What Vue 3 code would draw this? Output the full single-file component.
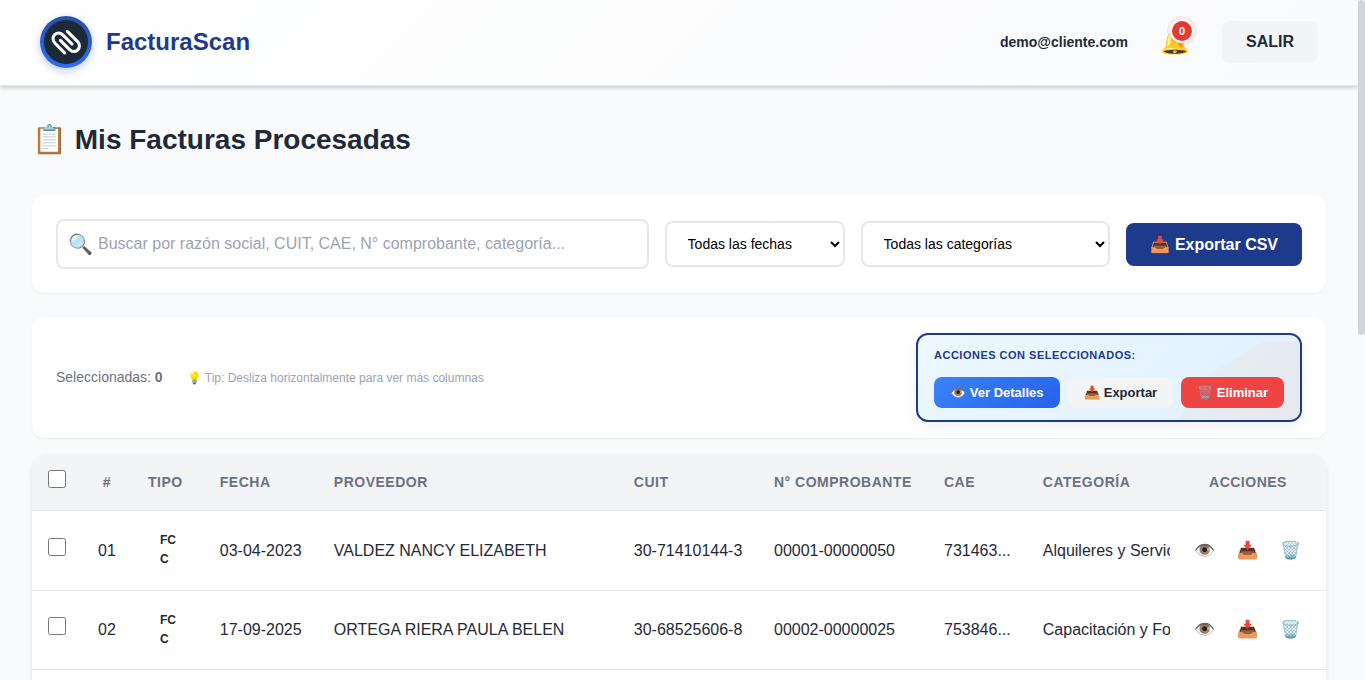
<template>
  <div class="app">
    <div class="page">
      <header class="header">
        <div class="brand">
          <div class="logo">
            <svg viewBox="0 0 44 44" width="44" height="44">
              <path d="M20.6 32.8 L10.8 23 C8.2 20.3 8.7 16.6 10.8 14.6 C13 12.5 16.2 12.3 18.8 14.8 L28 24" />
              <path d="M23.3 11.3 L33.6 21.6 C36.3 24.4 35.8 28 33.6 30 C31.4 32 28 32 25.6 29.6 L16.4 20.4" />
            </svg>
          </div>
          <span class="brand-name">FacturaScan</span>
        </div>
        <div class="user">
          <span class="email">demo@cliente.com</span>
          <div class="bell">🔔<span class="badge">0</span></div>
          <button class="btn-logout">SALIR</button>
        </div>
      </header>

      <main class="main">
        <h1 class="title">📋 Mis Facturas Procesadas</h1>

        <!-- Filters -->
        <section class="card filters">
          <div class="search">
            <span class="search-icon">🔍</span>
            <input v-model="search" type="text" placeholder="Buscar por razón social, CUIT, CAE, N° comprobante, categoría..." />
          </div>
          <select class="select select-date">
            <option>Todas las fechas</option>
          </select>
          <select class="select select-category">
            <option>Todas las categorías</option>
          </select>
          <button class="btn-csv">📥 Exportar CSV</button>
        </section>

        <!-- Bulk actions -->
        <section class="card selection">
          <div class="selection-info">
            <span class="count">Seleccionadas: <strong>{{ selected.length }}</strong></span>
            <span class="tip">💡 Tip: Desliza horizontalmente para ver más columnas</span>
          </div>
          <div class="bulk">
            <div class="bulk-title">ACCIONES CON SELECCIONADOS:</div>
            <div class="bulk-buttons">
              <button class="bulk-btn view">👁️ Ver Detalles</button>
              <button class="bulk-btn export">📥 Exportar</button>
              <button class="bulk-btn delete"><span class="faded">🗑️</span> Eliminar</button>
            </div>
          </div>
        </section>

        <!-- Invoices -->
        <div class="table-card">
          <table>
            <colgroup>
              <col v-for="(w, i) in widths" :key="i" :style="{ width: w + 'px' }" />
            </colgroup>
            <thead>
              <tr>
                <th class="check-cell"><input type="checkbox" class="check" /></th>
                <th class="center">#</th>
                <th>TIPO</th>
                <th>FECHA</th>
                <th>PROVEEDOR</th>
                <th>CUIT</th>
                <th>N° COMPROBANTE</th>
                <th>CAE</th>
                <th>CATEGORÍA</th>
                <th class="center">ACCIONES</th>
              </tr>
            </thead>
            <tbody>
              <tr v-for="row in invoices" :key="row.num">
                <td><input v-model="selected" type="checkbox" class="check" :value="row.num" /></td>
                <td class="center">{{ row.num }}</td>
                <td><span class="type">FC<br />C</span></td>
                <td>{{ row.date }}</td>
                <td>{{ row.provider }}</td>
                <td>{{ row.cuit }}</td>
                <td>{{ row.number }}</td>
                <td>{{ row.cae }}</td>
                <td class="category"><div>{{ row.category }}</div></td>
                <td class="actions">
                  <div class="row-actions">
                    <button>👁️</button>
                    <button>📥</button>
                    <button>🗑️</button>
                  </div>
                </td>
              </tr>
            </tbody>
          </table>
        </div>
      </main>
    </div>
    <div class="scrollbar"><div class="thumb"></div></div>
  </div>
</template>

<script setup>
import { ref } from 'vue'

const search = ref('')
const selected = ref([])
const widths = [50, 50, 71.8, 114, 300, 140.2, 170, 98.8, 143.2, 156]

const invoices = [
  { num: '01', date: '03-04-2023', provider: 'VALDEZ NANCY ELIZABETH', cuit: '30-71410144-3', number: '00001-00000050', cae: '731463...', category: 'Alquileres y Servicios' },
  { num: '02', date: '17-09-2025', provider: 'ORTEGA RIERA PAULA BELEN', cuit: '30-68525606-8', number: '00002-00000025', cae: '753846...', category: 'Capacitación y Formación' }
]
</script>

<style>
body {
  margin: 0;
  overflow: hidden;
}
</style>

<style scoped>
.app {
  display: flex;
  height: 680px;
  overflow: hidden;
  background: #f9fafc;
  color: #1f2937;
  font-family: "Liberation Sans", Arial, sans-serif;
  font-size: 16px;
}

.app * {
  box-sizing: border-box;
}

button {
  border: 0;
  font-family: inherit;
  white-space: nowrap;
}

.page {
  flex: 1;
  min-width: 0;
}

.header {
  display: flex;
  align-items: center;
  justify-content: space-between;
  height: 86px;
  padding: 0 40px 2px;
  background: linear-gradient(135deg, #ffffff 0%, #f9fafc 100%);
  border-bottom: 1px solid #e5e7eb;
  box-shadow: 0 2px 4px rgba(0, 0, 0, 0.18);
}

.brand {
  display: flex;
  align-items: center;
  gap: 14px;
}

.logo {
  display: flex;
  width: 52px;
  height: 52px;
  padding: 4px;
  border-radius: 50%;
  background: linear-gradient(180deg, #2c4fa8, #2d6cf5);
  box-shadow: 0 2px 8px rgba(37, 99, 235, 0.22), 0 4px 8px rgba(0, 0, 0, 0.08);
}

.logo svg {
  border-radius: 50%;
  background: #1c2938;
  fill: none;
  stroke: #fff;
  stroke-width: 3.1;
  stroke-linecap: round;
}

.brand-name {
  color: #1e3a8a;
  font-size: 24px;
  font-weight: 700;
}

.user {
  display: flex;
  align-items: center;
}

.email {
  font-size: 14px;
  font-weight: 600;
}

.bell {
  position: relative;
  width: 30px;
  margin: 0 32px;
  font-size: 24px;
  line-height: 28px;
}

.badge {
  position: absolute;
  top: -9px;
  left: 10px;
  width: 24px;
  height: 24px;
  border: 2px solid #fff;
  border-radius: 50%;
  background: #e53935;
  box-shadow: 0 0 0 3px rgba(239, 68, 68, 0.1);
  color: #fff;
  font-size: 11px;
  font-weight: 700;
  line-height: 20px;
  text-align: center;
}

.btn-logout {
  width: 96px;
  height: 42px;
  border-radius: 8px;
  background: #f3f4f6;
  color: #1f2937;
  font-size: 16px;
  font-weight: 600;
}

.main {
  padding: 32px;
}

.title {
  height: 45px;
  margin: 0 0 32px;
  font-size: 28px;
  line-height: 43px;
}

.card {
  display: flex;
  align-items: center;
  border-radius: 12px;
  background: #fff;
  box-shadow: 0 1px 2px rgba(0, 0, 0, 0.06);
}

.filters {
  gap: 16px;
  height: 98px;
  padding: 0 24px;
}

.search {
  display: flex;
  flex: 1;
  align-items: center;
  height: 50px;
  padding-left: 10px;
  border: 2px solid #e5e7eb;
  border-radius: 8px;
}

.search-icon {
  width: 30px;
  font-size: 20px;
}

.search input {
  flex: 1;
  padding: 0;
  border: 0;
  outline: 0;
  background: none;
  font-family: inherit;
  font-size: 16px;
}

.search input::placeholder {
  color: #9ca3af;
}

.select {
  height: 46px;
  padding: 0 0 0 16.6px;
  border: 2px solid #e5e7eb;
  border-radius: 8px;
  background: #fff;
  color: #000;
  font-family: inherit;
  font-size: 14px;
}

.select-date {
  width: 180px;
}

.select-category {
  width: 249px;
}

.btn-csv {
  width: 176px;
  height: 43px;
  padding: 0 0 0 0.5px;
  border-radius: 8px;
  background: #1e3a8a;
  color: #fff;
  font-size: 16px;
  font-weight: 600;
}

.selection {
  justify-content: space-between;
  height: 121px;
  margin-top: 24px;
  padding: 0 24px;
}

.selection-info {
  display: flex;
  align-items: center;
  gap: 24px;
  color: #6b7280;
  font-size: 14px;
}

.count {
  padding-bottom: 2px;
}

.tip {
  color: #9ca3af;
  font-size: 12px;
}

.bulk {
  position: relative;
  width: 386px;
  height: 89px;
  padding: 14px 16px;
  border: 2px solid #1e3a8a;
  border-radius: 12px;
  overflow: hidden;
  background: linear-gradient(135deg, #edf8ff 0%, #e0f0fe 100%);
  box-shadow: 0 4px 12px rgba(30, 58, 138, 0.08);
}

/* Grey corner behind the buttons */
.bulk::before {
  content: '';
  position: absolute;
  top: 6px;
  right: 0;
  bottom: 0;
  width: 122px;
  clip-path: polygon(70% 0, 100% 0, 100% 100%, 0 100%, 23% 45%);
  background: linear-gradient(135deg, #e3effa, #e7e8ec);
}

.bulk-title {
  position: relative;
  height: 28px;
  color: #1e3a8a;
  font-size: 11px;
  font-weight: 700;
  letter-spacing: 0.5px;
}

.bulk-buttons {
  position: relative;
  display: flex;
  gap: 8px;
}

.bulk-btn {
  height: 31px;
  padding: 0 16px;
  border-radius: 8px;
  color: #fff;
  font-size: 13px;
  font-weight: 600;
}

.bulk-btn.view {
  padding: 0 16.6px 0 16.2px;
  background: linear-gradient(135deg, #3b82f6, #2563eb);
}

.bulk-btn.export {
  background: #f3f4f6;
  color: #1f2937;
}

.bulk-btn.delete {
  background: #ef4444;
}

.faded {
  opacity: 0.65;
}

.table-card {
  min-height: 320px;
  margin-top: 17px;
  border-radius: 16px;
  overflow: hidden;
  background: #fff;
  box-shadow: 0 1px 5px rgba(0, 0, 0, 0.1);
}

table {
  width: 1294px;
  table-layout: fixed;
  border-collapse: separate;
  border-spacing: 0;
}

th,
td {
  padding: 0 0 0 16px;
  border-bottom: 1px solid #e5e7eb;
  text-align: left;
  white-space: nowrap;
}

th {
  height: 56px;
  padding-bottom: 2px;
  background: #f3f4f6;
  color: #6b7280;
  font-size: 14px;
  font-weight: 600;
  letter-spacing: 0.5px;
}

td {
  height: 80px;
}

tbody tr + tr td {
  height: 79px;
}

td.center {
  padding: 0;
}

th.center {
  padding: 0 0 2px;
}

.center {
  text-align: center;
}

th.check-cell {
  padding-bottom: 0;
}

.check {
  display: block;
  width: 18px;
  height: 18px;
  margin: 0 0 8px;
}

.type {
  display: block;
  padding: 0 0 1px 12px;
  font-size: 12px;
  font-weight: 600;
  line-height: 19px;
}

.category div {
  overflow: hidden;
}

td.actions {
  padding: 0;
}

tr + tr td.actions {
  padding-bottom: 2px;
}

.row-actions {
  display: flex;
  justify-content: center;
  gap: 7px;
}

.row-actions button {
  width: 36px;
  padding: 0;
  background: none;
  font-size: 17px;
}

.scrollbar {
  width: 7px;
  background: #f9fafc;
}

.thumb {
  height: 335px;
  border-radius: 4px;
  background: #d1d5db;
}
</style>
